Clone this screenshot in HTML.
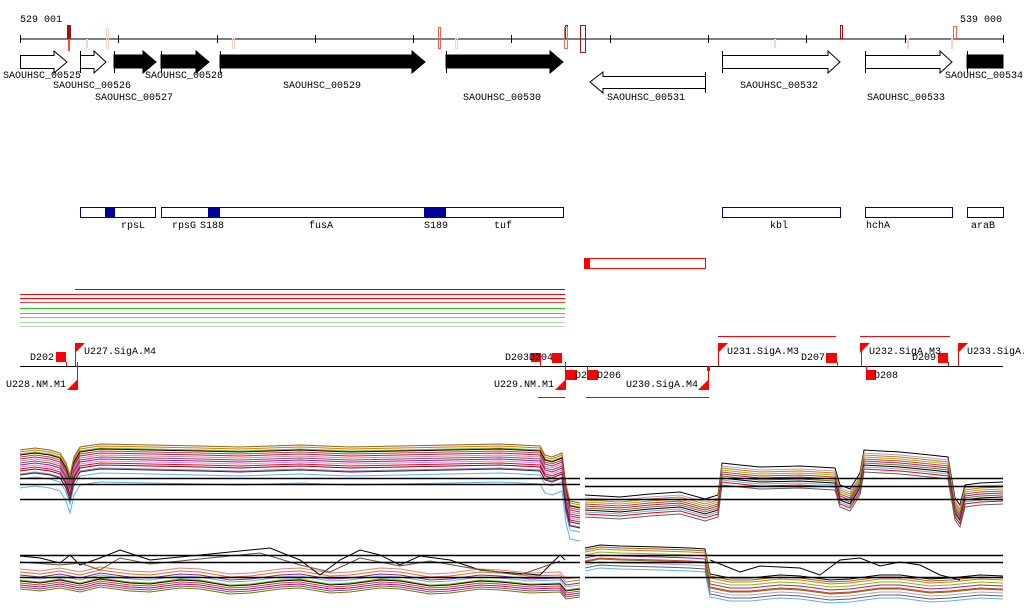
<!DOCTYPE html>
<html><head><meta charset="utf-8"><style>
body{margin:0;background:#fff}
svg text{font-family:"Liberation Mono",monospace;font-size:10px;fill:#000}
</style></head><body>
<svg width="1024" height="611" viewBox="0 0 1024 611" xmlns="http://www.w3.org/2000/svg">
<defs>
<path id="A" d="M20,455 L35,453 50,455 60,458 66,468 70,480 74,462 80,452 100,449 150,450 200,451 240,452 300,450 350,452 400,451 450,450 500,449 540,451 545,460 552,462 562,458 566,490 570,506 580,508" fill="none"/>
<path id="B" d="M585,500 L620,502 650,499 680,497 705,504 718,500 722,468 740,470 760,472 800,471 835,473 840,490 850,494 860,478 864,455 900,457 930,460 948,462 955,503 960,510 965,490 980,488 1003,487" fill="none"/>
<path id="C" d="M20,580 L40,582 60,579 80,583 100,578 130,582 150,583 180,579 200,580 230,585 250,584 280,580 300,579 330,584 350,583 380,579 400,580 430,585 450,584 480,580 500,581 530,584 560,583 566,590 580,588" fill="none"/>
<path id="D" d="M585,552 L600,549 620,550 660,551 690,552 705,553 710,578 730,582 750,582 780,579 800,580 830,584 850,583 880,579 900,579 930,583 950,582 980,579 1003,580" fill="none"/>
</defs>
<!-- ruler -->
<text x="20" y="22">529 001</text><text x="960" y="22">539 000</text>
<line x1="20" y1="39" x2="1003" y2="39" stroke="#000"/>
<g stroke="#000">
<line x1="20.5" y1="35" x2="20.5" y2="43"/><line x1="118.5" y1="35" x2="118.5" y2="43"/><line x1="217.5" y1="35" x2="217.5" y2="43"/><line x1="315.5" y1="35" x2="315.5" y2="43"/><line x1="413.5" y1="35" x2="413.5" y2="43"/><line x1="511.5" y1="35" x2="511.5" y2="43"/><line x1="610.5" y1="35" x2="610.5" y2="43"/><line x1="708.5" y1="35" x2="708.5" y2="43"/><line x1="806.5" y1="35" x2="806.5" y2="43"/><line x1="905.5" y1="35" x2="905.5" y2="43"/><line x1="1003.5" y1="35" x2="1003.5" y2="43"/>
</g>
<rect x="67" y="25" width="4" height="14" fill="#a01010"/><rect x="68" y="39" width="2" height="12" fill="#f05030"/>
<rect x="86" y="39" width="2" height="9" fill="#fbd0c0"/>
<rect x="106.5" y="28.5" width="2" height="20" fill="none" stroke="#fbd0c0"/>
<rect x="232.5" y="38.5" width="2" height="10" fill="none" stroke="#fbd0c0"/>
<rect x="438.5" y="27.5" width="2" height="21" fill="none" stroke="#f06050"/>
<rect x="455.5" y="38.5" width="2" height="10" fill="none" stroke="#fbd0c0"/>
<rect x="565.5" y="25.5" width="2" height="13" fill="none" stroke="#a01010"/>
<rect x="564.5" y="27.5" width="3" height="21" fill="none" stroke="#f07060"/>
<rect x="580.5" y="25.5" width="5" height="27" fill="none" stroke="#b01010"/>
<rect x="774" y="39" width="2" height="9" fill="#fbd0c0"/>
<rect x="840.5" y="25.5" width="2" height="13" fill="none" stroke="#b01010"/>
<rect x="907.5" y="38.5" width="1" height="10" fill="none" stroke="#fbd0c0"/>
<rect x="953.5" y="26.5" width="3" height="12" fill="none" stroke="#f06050"/>
<rect x="951.5" y="38.5" width="1" height="10" fill="none" stroke="#fbd0c0"/>
<!-- genes -->
<g stroke="#000" fill="#fff">
<path d="M20.5,55.5 H54 V51 L67,62 54,73 V68.5 H20.5 Z"/>
<path d="M80.5,55.5 H94 V51 L106,62 94,73 V68.5 H80.5 Z"/><line x1="80.5" y1="51" x2="80.5" y2="73"/>
<path d="M722.5,55.5 H828 V51 L840,62 828,73 V68.5 H722.5 Z"/><line x1="722.5" y1="51" x2="722.5" y2="73"/>
<path d="M865.5,55.5 H940 V51 L952,62 940,73 V68.5 H865.5 Z"/><line x1="865.5" y1="51" x2="865.5" y2="73"/>
<path d="M705.5,76.5 H603 V72 L590,82 603,93 V88.5 H705.5 Z"/><line x1="705.5" y1="72" x2="705.5" y2="93"/>
</g>
<g fill="#000" stroke="#000">
<path d="M114,55 H143 V51 L156,62 143,73 V68 H114 Z"/><line x1="114.5" y1="51" x2="114.5" y2="73"/>
<path d="M161,55 H196 V51 L209,62 196,73 V68 H161 Z"/><line x1="161.5" y1="51" x2="161.5" y2="73"/>
<path d="M220,55 H412 V51 L425,62 412,73 V68 H220 Z"/><line x1="220.5" y1="51" x2="220.5" y2="73"/>
<path d="M446,55 H550 V51 L563,62 550,73 V68 H446 Z"/><line x1="446.5" y1="51" x2="446.5" y2="73"/>
<rect x="967" y="55" width="36" height="13"/><line x1="967.5" y1="51" x2="967.5" y2="73"/>
</g>
<text x="3" y="78">SAOUHSC_00525</text>
<text x="53" y="88">SAOUHSC_00526</text>
<text x="95" y="100">SAOUHSC_00527</text>
<text x="145" y="78">SAOUHSC_00528</text>
<text x="283" y="88">SAOUHSC_00529</text>
<text x="463" y="100">SAOUHSC_00530</text>
<text x="607" y="100">SAOUHSC_00531</text>
<text x="740" y="88">SAOUHSC_00532</text>
<text x="867" y="100">SAOUHSC_00533</text>
<text x="945" y="78">SAOUHSC_00534</text>
<!-- blue boxes -->
<g fill="none" stroke="#00009a">
<rect x="80.5" y="207.5" width="75" height="10"/><rect x="161.5" y="207.5" width="402" height="10"/>
<rect x="722.5" y="207.5" width="118" height="10"/><rect x="865.5" y="207.5" width="87" height="10"/><rect x="967.5" y="207.5" width="36" height="10"/>
</g>
<g fill="#00009a"><rect x="105" y="207" width="10" height="11"/><rect x="208" y="207" width="12" height="11"/><rect x="424" y="207" width="22" height="11"/></g>
<text x="121" y="228">rpsL</text><text x="172" y="228">rpsG</text><text x="200" y="228">S188</text><text x="309" y="228">fusA</text><text x="424" y="228">S189</text><text x="494" y="228">tuf</text><text x="770" y="228">kbl</text><text x="866" y="228">hchA</text><text x="971" y="228">araB</text>
<rect x="584.5" y="258.5" width="121" height="10" fill="none" stroke="#f00"/><rect x="584" y="258" width="6" height="11" fill="#f00"/>
<!-- lines -->
<line x1="75" y1="289.5" x2="565" y2="289.5" stroke="#c00000"/>
<line x1="20" y1="294.5" x2="565" y2="294.5" stroke="#f00"/>
<line x1="20" y1="298.5" x2="565" y2="298.5" stroke="#f00"/>
<line x1="20" y1="302.5" x2="565" y2="302.5" stroke="#f04040"/>
<line x1="20" y1="308.5" x2="565" y2="308.5" stroke="#20d020"/>
<line x1="20" y1="313.5" x2="565" y2="313.5" stroke="#20e020"/>
<line x1="20" y1="317.5" x2="565" y2="317.5" stroke="#60e060"/>
<line x1="20" y1="322.5" x2="565" y2="322.5" stroke="#a0e0a0"/>
<line x1="20" y1="326.5" x2="565" y2="326.5" stroke="#ccc"/>
<!-- track -->
<line x1="20" y1="366.5" x2="1003" y2="366.5" stroke="#000"/>
<g stroke="#f00" fill="none">
<line x1="718" y1="336.5" x2="836" y2="336.5"/><line x1="860" y1="336.5" x2="950" y2="336.5"/>
<line x1="538" y1="397.5" x2="565" y2="397.5"/><line x1="586" y1="397.5" x2="709" y2="397.5"/>
<path d="M66.5,362 V366 M75.5,344 V366 M77.5,362 V390 M540.5,362 V366 M565.5,362 V390 M587.5,366 V380 M708.5,366 V390 M718.5,344 V366 M837.5,362 V366 M861.5,344 V366 M866.5,366 V376 M948.5,362 V366 M958.5,344 V366"/>
</g>
<g fill="#f00">
<rect x="56" y="352" width="10" height="10"/>
<path d="M75,343 H85 L75,353Z M67,390 H77 V380Z"/>
<rect x="531" y="353" width="10" height="9"/><rect x="552" y="353" width="10" height="10"/>
<path d="M555,390 H565 V380Z"/>
<rect x="566" y="370" width="11" height="10"/><rect x="588" y="370" width="10" height="10"/>
<path d="M698,390 H708 V380Z"/><rect x="707" y="366" width="3" height="5"/>
<path d="M718,343 H728 L718,353Z"/><rect x="826" y="353" width="11" height="10"/>
<path d="M860,343 H870 L860,353Z"/><rect x="866" y="370" width="10" height="10"/>
<rect x="938" y="353" width="10" height="10"/>
<path d="M958,343 H968 L958,353Z"/>
</g>
<text x="30" y="360">D202</text><text x="84" y="354">U227.SigA.M4</text><text x="6" y="387">U228.NM.M1</text>
<text x="505" y="360">D203D204</text><text x="494" y="387">U229.NM.M1</text><text x="575" y="378">D2</text><text x="597" y="378">D206</text>
<text x="626" y="387">U230.SigA.M4</text><text x="727" y="354">U231.SigA.M3</text><text x="801" y="360">D207</text>
<text x="869" y="354">U232.SigA.M3</text><text x="912" y="360">D209</text><text x="874" y="378">D208</text><text x="967" y="354">U233.SigA.</text>
<!-- upper plot -->
<g stroke-width="1">
<use href="#A" stroke="#8b6914" transform="translate(0,-5)"/><use href="#A" stroke="#e07020" transform="translate(0,-3)"/><use href="#A" stroke="#80c000" transform="translate(0,-1)"/><use href="#A" stroke="#000"/><use href="#A" stroke="#d04020" transform="translate(0,2)"/><use href="#A" stroke="#a02080" transform="translate(0,4)"/><use href="#A" stroke="#e08080" transform="translate(0,6)"/><use href="#A" stroke="#606060" transform="translate(0,8)"/><use href="#A" stroke="#c000a0" transform="translate(0,10)"/><use href="#A" stroke="#b0a0d0" transform="translate(0,12)"/><use href="#A" stroke="#f00" transform="translate(0,14)"/><use href="#A" stroke="#800040" transform="translate(0,16)"/><use href="#A" stroke="#8888cc" transform="translate(0,19)"/><use href="#A" stroke="#60b0f0" transform="translate(0,24)"/><use href="#A" stroke="#60b0f0" transform="translate(0,33)"/><use href="#A" stroke="#502020" transform="translate(0,20)"/>
<use href="#B" stroke="#000" transform="translate(0,-5)"/><use href="#B" stroke="#b0a0d0" transform="translate(0,-2)"/><use href="#B" stroke="#e07020"/><use href="#B" stroke="#80c000" transform="translate(0,2)"/><use href="#B" stroke="#d04020" transform="translate(0,4)"/><use href="#B" stroke="#a02080" transform="translate(0,6)"/><use href="#B" stroke="#8b6914" transform="translate(0,8)"/><use href="#B" stroke="#000" transform="translate(0,10)"/><use href="#B" stroke="#60b0f0" transform="translate(0,12)"/><use href="#B" stroke="#f00" transform="translate(0,14)"/><use href="#B" stroke="#606060" transform="translate(0,17)"/>
<use href="#C" stroke="#8b6914" transform="translate(0,9)"/><use href="#C" stroke="#e07020" transform="translate(0,-8)"/><use href="#C" stroke="#a02080" transform="translate(0,-5)"/><use href="#C" stroke="#60b0f0" transform="translate(0,-3)"/><use href="#C" stroke="#80c000"/><use href="#C" stroke="#000" transform="translate(0,1)"/><use href="#C" stroke="#d04020" transform="translate(0,3)"/><use href="#C" stroke="#c000a0" transform="translate(0,5)"/><use href="#C" stroke="#e08080" transform="translate(0,-11)"/><use href="#C" stroke="#606060" transform="translate(0,7)"/>
<use href="#D" stroke="#000" transform="translate(0,-4)"/><use href="#D" stroke="#8b6914" transform="translate(0,-2)"/><use href="#D" stroke="#e07020"/><use href="#D" stroke="#80c000" transform="translate(0,3)"/><use href="#D" stroke="#a02080" transform="translate(0,6)"/><use href="#D" stroke="#d04020" transform="translate(0,9)"/><use href="#D" stroke="#b0a0d0" transform="translate(0,13)"/><use href="#D" stroke="#606060" transform="translate(0,16)"/><use href="#D" stroke="#60b0f0" transform="translate(0,19)"/><use href="#D" stroke="#8b6914" transform="translate(0,10)"/>
</g>
<path d="M20,556 L40,558 60,563 70,555 80,565 100,558 120,550 150,560 200,555 250,550 270,548 300,560 320,575 340,560 360,550 380,555 400,565 420,556 450,560 480,570 500,572 540,575 560,555 565,560" fill="none" stroke="#000"/>
<path d="M20,562 L60,565 80,563 100,570 120,558 150,564 200,559 260,553 300,565 330,572 360,558 400,566 430,561 470,568 520,575 560,561" fill="none" stroke="#6b5030"/>
<path d="M710,560 L720,564 740,572 760,566 800,568 820,575 840,560 860,558 880,566 900,562 920,565 940,575 960,580" fill="none" stroke="#000"/>
<g stroke="#000" stroke-width="1.5">
<line x1="20" y1="478.5" x2="580" y2="478.5"/><line x1="585" y1="478.5" x2="1003" y2="478.5"/>
<line x1="20" y1="484.5" x2="580" y2="484.5"/><line x1="585" y1="486.5" x2="1003" y2="486.5"/>
<line x1="20" y1="499.5" x2="1003" y2="499.5"/>
<line x1="20" y1="555.5" x2="580" y2="555.5"/><line x1="585" y1="555.5" x2="1003" y2="555.5"/>
<line x1="20" y1="562.5" x2="580" y2="562.5"/><line x1="585" y1="562.5" x2="1003" y2="562.5"/>
<line x1="20" y1="577.5" x2="580" y2="577.5"/><line x1="585" y1="577.5" x2="1003" y2="577.5"/>
</g>
</svg>
</body></html>
